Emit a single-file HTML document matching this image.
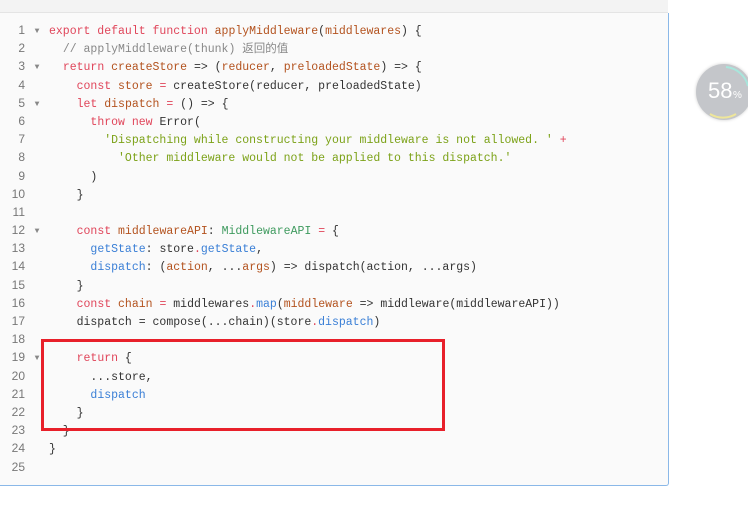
<!DOCTYPE html>
<html><head><meta charset="utf-8"><style>
body{margin:0;width:748px;height:521px;background:#fff;position:relative;overflow:hidden;font-family:"Liberation Mono","Noto Sans CJK SC",monospace;}
.top{position:absolute;left:0;top:0;width:668px;height:12px;background:#f3f3f3;border-bottom:1px solid #e4e4e4;}
.box{position:absolute;left:0;top:13px;width:668px;height:472px;background:#fafafa;border-right:1px solid #8ab8e8;border-bottom:1px solid #8ab8e8;border-bottom-right-radius:3px;}
.code{position:absolute;left:0;top:21px;font-size:11.5px;line-height:18.2px;color:#333;}
.l{height:18.2px;white-space:pre;position:relative;}
.n{display:inline-block;width:25px;text-align:right;color:#777;font-family:"Liberation Sans",sans-serif;font-size:12px;}
.a{display:inline-block;width:24px;color:#888;font-size:8px;text-align:center;vertical-align:1px;}
.k{color:#e0455a}.v{color:#b3521e}.s{color:#7ca218}.t{color:#3e9a5e}.p{color:#3a7fd6}.c{color:#888}
.red{position:absolute;left:41px;top:339px;width:398px;height:86px;border:3px solid #e8202a;}
.circ{position:absolute;left:696px;top:64px;width:56px;height:56px;border-radius:50%;background:#c4c6ca;box-shadow:0 0 3px rgba(0,0,0,.2);color:#fff;font-family:"Liberation Sans",sans-serif;}
</style></head><body>
<div class="top"></div><div class="box"></div>
<div class="code">
<div class="l"><span class="n">1</span><span class="a">▼</span><span class="k">export default function</span> <span class="v">applyMiddleware</span>(<span class="v">middlewares</span>) {</div>
<div class="l"><span class="n">2</span><span class="a"></span>  <span class="c">// applyMiddleware(thunk) 返回的值</span></div>
<div class="l"><span class="n">3</span><span class="a">▼</span>  <span class="k">return</span> <span class="v">createStore</span> =&gt; (<span class="v">reducer</span>, <span class="v">preloadedState</span>) =&gt; {</div>
<div class="l"><span class="n">4</span><span class="a"></span>    <span class="k">const</span> <span class="v">store</span> <span class="k">=</span> createStore(reducer, preloadedState)</div>
<div class="l"><span class="n">5</span><span class="a">▼</span>    <span class="k">let</span> <span class="v">dispatch</span> <span class="k">=</span> () =&gt; {</div>
<div class="l"><span class="n">6</span><span class="a"></span>      <span class="k">throw new</span> Error(</div>
<div class="l"><span class="n">7</span><span class="a"></span>        <span class="s">'Dispatching while constructing your middleware is not allowed. '</span> <span class="k">+</span></div>
<div class="l"><span class="n">8</span><span class="a"></span>          <span class="s">'Other middleware would not be applied to this dispatch.'</span></div>
<div class="l"><span class="n">9</span><span class="a"></span>      )</div>
<div class="l"><span class="n">10</span><span class="a"></span>    }</div>
<div class="l"><span class="n">11</span><span class="a"></span></div>
<div class="l"><span class="n">12</span><span class="a">▼</span>    <span class="k">const</span> <span class="v">middlewareAPI</span>: <span class="t">MiddlewareAPI</span> <span class="k">=</span> {</div>
<div class="l"><span class="n">13</span><span class="a"></span>      <span class="p">getState</span>: store<span class="k">.</span><span class="p">getState</span>,</div>
<div class="l"><span class="n">14</span><span class="a"></span>      <span class="p">dispatch</span>: (<span class="v">action</span>, ...<span class="v">args</span>) =&gt; dispatch(action, ...args)</div>
<div class="l"><span class="n">15</span><span class="a"></span>    }</div>
<div class="l"><span class="n">16</span><span class="a"></span>    <span class="k">const</span> <span class="v">chain</span> <span class="k">=</span> middlewares<span class="k">.</span><span class="p">map</span>(<span class="v">middleware</span> =&gt; middleware(middlewareAPI))</div>
<div class="l"><span class="n">17</span><span class="a"></span>    dispatch = compose(...chain)(store<span class="k">.</span><span class="p">dispatch</span>)</div>
<div class="l"><span class="n">18</span><span class="a"></span></div>
<div class="l"><span class="n">19</span><span class="a">▼</span>    <span class="k">return</span> {</div>
<div class="l"><span class="n">20</span><span class="a"></span>      ...store,</div>
<div class="l"><span class="n">21</span><span class="a"></span>      <span class="p">dispatch</span></div>
<div class="l"><span class="n">22</span><span class="a"></span>    }</div>
<div class="l"><span class="n">23</span><span class="a"></span>  }</div>
<div class="l"><span class="n">24</span><span class="a"></span>}</div>
<div class="l"><span class="n">25</span><span class="a"></span></div>
</div>
<div class="red"></div>
<div class="circ">
<svg width="56" height="56" style="position:absolute;left:0;top:0"><path d="M30 3 A25 25 0 0 1 52 22" stroke="#a8e6dc" stroke-width="2" fill="none"/><path d="M14 50 A25 25 0 0 0 40 50" stroke="#eee69a" stroke-width="2" fill="none"/></svg>
<span style="position:absolute;left:12px;top:14px;font-size:22px;">58</span><span style="position:absolute;left:37px;top:26px;font-size:10px;">%</span>
</div>
</body></html>
